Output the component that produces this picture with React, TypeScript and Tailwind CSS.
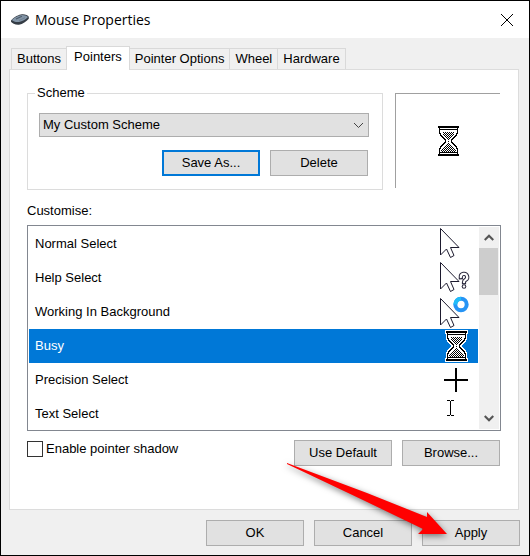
import { useState } from 'react';
import type { ReactNode } from 'react';

const tabs = ['Buttons', 'Pointers', 'Pointer Options', 'Wheel', 'Hardware'];

const hourglassRows = [
  '#####################',
  '#####################',
  '.#.................#.',
  '.###################.',
  '.#.................#.',
  '.#.................#.',
  '.#...#.#.#.#.#.#...#.',
  '.##...#.#.#.#.#...##.',
  '..#..#.#.#.#.#.#..#..',
  '..##..#.#.#.#.#..##..',
  '...##..#.#.#.#..##...',
  '....##..#.#.#..##....',
  '.....##..#.#..##.....',
  '......##..#..##......',
  '.......#.....#.......',
  '.......#..#..#.......',
  '......##.....##......',
  '.....##...#...##.....',
  '....##...#.#...##....',
  '...##...#.#.#...##...',
  '..##...#.#.#.#...##..',
  '..#...#.#.#.#.#...#..',
  '.##..#.#.#.#.#.#..##.',
  '.#..#.#.#.#.#.#.#..#.',
  '.#.#.#.#.#.#.#.#.#.#.',
  '.#..#.#.#.#.#.#.#..#.',
  '.###################.',
  '.#.................#.',
  '#####################',
  '#####################',
];

// Pixel cursor, with a one pixel white rim behind the black dots
function Hourglass() {
  return (
    <svg width="23" height="32" viewBox="-1 -1 23 32" shapeRendering="crispEdges" aria-hidden="true">
      {hourglassRows.map((row, y) => {
        const left = row.indexOf('#');
        return <rect key={y} x={left - 1} y={y - 1} width={23 - left * 2} height="3" fill="#fff" />;
      })}
      {hourglassRows.map((row, y) =>
        [...row].map((dot, x) => dot === '#' && <rect key={`${x}-${y}`} x={x} y={y} width="1" height="1" />)
      )}
    </svg>
  );
}

const arrowPath = 'M.5.5v26.5l6-6 4 8.500 3.500-2-3.500-8h8.500z';
const questionPath = 'M20.800 15.200a3.200 3.200 0 1 1 4.700 2.700c-1.100.6-1.500 1.100-1.500 2.300';

function Arrow({ children }: { children?: ReactNode }) {
  return (
    <svg width="32" height="32" viewBox="0 0 32 32" aria-hidden="true">
      {children ?? <path d={arrowPath} fill="#fff" stroke="#1c1a2e" />}
    </svg>
  );
}

function MouseIcon() {
  return (
    <svg width="18" height="11" viewBox="0 0 18 11" aria-hidden="true">
      <path d="M0 6.500C3 3 8 .5 11 .3c3-.2 6 .8 6.800 2.400v2c-2.500 2.800-6 5.300-9.800 6C4.500 11 1 9.500 0 7.800z" fill="#343c45" />
      <path d="M.8 6C4 3 8 1.200 11 1c2.500 0 5 .8 6 2-2 2.300-6 4.600-9 5C5 8.300 2 7.500.8 6z" fill="#8395a7" />
      <path d="m5 5 6-2.800" stroke="#4c5b6a" strokeWidth="1.200" />
      <path d="m8 6.500 6-2.800" stroke="#6e8092" />
    </svg>
  );
}

const pointers = [
  { name: 'Normal Select', icon: <Arrow />, pad: 'pr-1.5' },
  {
    name: 'Help Select',
    icon: (
      <Arrow>
        <path d={arrowPath} fill="#fff" stroke="#1c1a2e" />
        <g fill="none">
          <path d={questionPath} stroke="#2c2a3e" strokeWidth="4.200" strokeLinecap="square" />
          <circle cx="24" cy="24.500" r="2.300" fill="#2c2a3e" />
          <path d={questionPath} stroke="#fff" strokeWidth="2.200" strokeLinecap="round" />
          <circle cx="24" cy="24.500" r="1.200" fill="#fff" />
        </g>
      </Arrow>
    ),
    pad: 'pr-1.5',
  },
  {
    name: 'Working In Background',
    icon: (
      <Arrow>
        <path d={arrowPath} transform="translate(0 2)" fill="#fff" stroke="#1c1a2e" />
        <circle cx="21" cy="8.500" r="5.700" fill="#fff" stroke="#2694f5" strokeWidth="4" />
        <path d="M15.300 8.500A5.700 5.700 0 0 1 21 2.800" fill="none" stroke="#20bdf9" strokeWidth="4" />
      </Arrow>
    ),
    pad: 'pr-1.5',
  },
  { name: 'Busy', icon: <Hourglass />, pad: 'pr-2.5' },
  {
    name: 'Precision Select',
    icon: (
      <svg width="24" height="24" viewBox="0 0 24 24" shapeRendering="crispEdges" aria-hidden="true">
        <path d="M11 0h2v24h-2zM0 11h24v2H0z" />
      </svg>
    ),
    pad: 'pr-2.5',
  },
  {
    name: 'Text Select',
    icon: (
      <svg width="7" height="16" viewBox="0 0 7 16" shapeRendering="crispEdges" aria-hidden="true">
        <path d="M0 0h3v1H0zM4 0h3v1H4zM3 1h1v14H3zM0 15h3v1H0zM4 15h3v1H4z" />
      </svg>
    ),
    pad: 'pr-6 pb-3',
  },
];

function DialogButton({ children, focused = false }: { children: ReactNode; focused?: boolean }) {
  return (
    <button
      type="button"
      className={`h-[26px] w-[98px] bg-[#e1e1e1] ${
        focused ? 'border-2 border-[#0078d7]' : 'border border-[#adadad]'
      }`}
    >
      {children}
    </button>
  );
}

function Chevron({ className = '' }: { className?: string }) {
  return (
    <svg className={className} width="10" height="7" viewBox="0 0 10 7" fill="none" stroke="#555" aria-hidden="true">
      <path d="m.7 1 4.300 4.300L9.300 1" strokeWidth="2.200" />
    </svg>
  );
}

export default function App() {
  const [activeTab, setActiveTab] = useState('Pointers');
  const [selected, setSelected] = useState('Busy');

  return (
    <div className="relative border border-black bg-[#f0f0f0] font-['Liberation_Sans',sans-serif] text-[13px] leading-4 text-black">
      {/* Title bar */}
      <header className="flex h-[37px] items-center bg-white pr-4 pl-2.5">
        <MouseIcon />
        <h1 className="ml-1.5 font-['Open_Sans',sans-serif] text-sm">Mouse Properties</h1>
        <button type="button" aria-label="Close" className="ml-auto">
          <svg width="12" height="12" viewBox="0 0 12 12" stroke="#000" aria-hidden="true">
            <path d="m0 0 12 12M12 0 0 12" />
          </svg>
        </button>
      </header>

      <main className="pt-2 pr-[9px] pb-[9px] pl-2">
        {/* Tabs */}
        <div role="tablist" className="flex items-end pl-0.5">
          {tabs.map((tab) => (
            <button
              key={tab}
              type="button"
              role="tab"
              aria-selected={tab === activeTab}
              onClick={() => setActiveTab(tab)}
              className={
                tab === activeTab
                  ? 'relative -mr-px -mb-px h-6 border border-b-0 border-[#d9d9d9] bg-white px-[7px] pb-1'
                  : 'h-[21px] border border-r-0 border-b-0 border-[#d9d9d9] px-[5px] last:border-r'
              }
            >
              {tab}
            </button>
          ))}
        </div>

        <section className="mr-px border border-[#dcdcdc] bg-white px-[17px] pt-4 pb-[43px]">
          <div className="flex gap-3">
            <fieldset className="-mt-px flex-1 border border-[#dcdcdc] px-[11px] pb-[13px]">
              <legend className="-ml-1 px-0.5">Scheme</legend>
              <div className="relative mt-3 mr-0.5">
                <select aria-label="Scheme" className="h-6 w-full appearance-none border border-[#adadad] bg-[#e1e1e1] px-[3px]">
                  <option>My Custom Scheme</option>
                </select>
                <svg
                  className="pointer-events-none absolute top-[9px] right-[5px]"
                  width="11"
                  height="7"
                  viewBox="0 0 11 7"
                  fill="none"
                  stroke="#444"
                  aria-hidden="true"
                >
                  <path d="m1 1 4.500 4.500L10 1" />
                </svg>
              </div>
              <div className="mt-[13px] mr-[3px] flex justify-end gap-2.5">
                <DialogButton focused>Save As...</DialogButton>
                <DialogButton>Delete</DialogButton>
              </div>
            </fieldset>
            <div className="mt-[7px] mr-px mb-0.5 flex w-[105px] items-center justify-center border-t border-l border-[#a0a0a0]">
              <Hourglass />
            </div>
          </div>

          <h2 className="mt-[13px]">Customise:</h2>
          <div className="mt-1.5 flex h-[206px] overflow-hidden border border-[#828790] p-px">
            <ul role="listbox" aria-label="Customise" className="flex-1">
              {pointers.map(({ name, icon, pad }) => (
                <li
                  key={name}
                  role="option"
                  aria-selected={name === selected}
                  onClick={() => setSelected(name)}
                  className={`flex h-[34px] items-center justify-between pl-1.5 ${
                    name === selected ? 'bg-[#0078d7] text-white' : ''
                  }`}
                >
                  <span>{name}</span>
                  <span className={pad}>{icon}</span>
                </li>
              ))}
            </ul>
            <div className="ml-px flex w-5 flex-col items-center bg-[#f0f0f0] py-[7px] pr-px">
              <Chevron className="rotate-180" />
              <div className="mt-[7px] h-[47px] w-full bg-[#cdcdcd]" />
              <Chevron className="mt-auto" />
            </div>
          </div>

          <div className="mt-[9px] mr-px flex gap-2.5">
            <label className="mr-auto flex h-[18px] items-center gap-[3px]">
              <input type="checkbox" className="size-4 appearance-none border border-[#333] bg-white checked:bg-[#0078d7]" />
              Enable pointer shadow
            </label>
            <DialogButton>Use Default</DialogButton>
            <DialogButton>Browse...</DialogButton>
          </div>
        </section>

        <footer className="mt-2.5 flex justify-end gap-2.5">
          <DialogButton>OK</DialogButton>
          <DialogButton>Cancel</DialogButton>
          <DialogButton>Apply</DialogButton>
        </footer>
      </main>

      {/* Arrow pointing at Apply */}
      <svg
        className="pointer-events-none absolute right-[70px] bottom-0 drop-shadow-[0_2px_3px_rgba(0,0,0,0.5)]"
        width="174"
        height="96"
        viewBox="0 0 174 96"
        aria-hidden="true"
      >
        <path d="m2 4 80 30 60 24v-5l20 22h-29l5-5-58-28L2 5z" fill="#f00" />
      </svg>
    </div>
  );
}
